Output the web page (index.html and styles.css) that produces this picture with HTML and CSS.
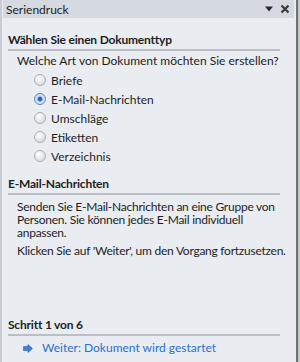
FILE: index.html
```html
<!DOCTYPE html>
<html lang="de">
<head>
<meta charset="utf-8">
<link rel="stylesheet" href="styles.css">
</head>
<body>
<div class="frame">
  <div class="pane">
    <div class="titlebar">
      <span class="title">Seriendruck</span>
      <span class="tools">
        <svg class="ico" width="10" height="6" viewBox="0 0 10 6"><path d="M1 0.5 L9 0.5 L5 5.5 Z" fill="#2b2b2b"/></svg>
        <svg class="ico" width="10" height="10" viewBox="0 0 10 10"><path d="M1.5 1.5 L8.5 8.5 M8.5 1.5 L1.5 8.5" stroke="#3a3a3a" stroke-width="2.2"/></svg>
      </span>
    </div>
    <div class="body">
      <div class="section">
        <div class="heading">Wählen Sie einen Dokumenttyp</div>
        <div class="question">Welche Art von Dokument möchten Sie erstellen?</div>
        <div class="radios">
          <div class="radio"><span class="dot"></span>Briefe</div>
          <div class="radio"><span class="dot on"></span>E-Mail-Nachrichten</div>
          <div class="radio"><span class="dot"></span>Umschläge</div>
          <div class="radio"><span class="dot"></span>Etiketten</div>
          <div class="radio"><span class="dot"></span>Verzeichnis</div>
        </div>
      </div>
      <div class="section second">
        <div class="heading">E-Mail-Nachrichten</div>
        <p class="text">Senden Sie E-Mail-Nachrichten an eine Gruppe von Personen. Sie können jedes E-Mail individuell anpassen.</p>
        <p class="text">Klicken Sie auf 'Weiter', um den Vorgang fortzusetzen.</p>
      </div>
      <div class="spacer"></div>
      <div class="section footer">
        <div class="heading">Schritt 1 von 6</div>
        <div class="link">
          <svg class="arrow" width="10" height="9" viewBox="0 0 10 9"><path d="M0.5 2.5 H5 V0.5 L9.5 4.5 L5 8.5 V6.5 H0.5 Z" fill="#3f7fd6" stroke="#2a5fae" stroke-width="0.6"/></svg>
          <span>Weiter: Dokument wird gestartet</span>
        </div>
      </div>
    </div>
  </div>
  <div class="edge"></div>
</div>
</body>
</html>
```
FILE: styles.css
```css
html, body {
  margin: 0;
  padding: 0;
  height: 100%;
}
body {
  font-family: Lato, "Liberation Sans", sans-serif;
  font-size: 12px;
  color: #1e1e1e;
  background: #e9ecf1;
}
.frame {
  display: flex;
  height: 362px;
  border-left: 2px solid #c9cdd3;
}
.pane {
  flex: 1;
  display: flex;
  flex-direction: column;
  background: #e9ecf1;
  padding-left: 1px;
  padding-right: 2px;
}
.edge {
  width: 4px;
  background: linear-gradient(to right, #6e7379 0, #6e7379 2px, #b9c4b6 2px, #c9d1c4 4px);
}
.titlebar {
  height: 18px;
  background: #d5d9e1;
  display: flex;
  align-items: center;
  justify-content: space-between;
  padding: 0 4px 0 3px;
}
.title {
  font-size: 12px;
  color: #222;
}
.tools {
  display: flex;
  align-items: center;
  gap: 6px;
}
.body {
  flex: 1;
  display: flex;
  flex-direction: column;
  padding: 0 14px 0 5px;
}
.section {
  display: flex;
  flex-direction: column;
}
.heading {
  font-weight: bold;
  margin-top: 14px;
  padding-bottom: 1px;
  border-bottom: 2px solid #babec5;
  line-height: 16px;
  letter-spacing: -0.2px;
}
.question {
  margin: 2px -6px 0 9px;
  line-height: 16px;
}
.radios {
  display: flex;
  flex-direction: column;
  margin: 2px 0 0 26px;
  gap: 1px;
}
.radio {
  display: flex;
  align-items: center;
  gap: 5px;
  height: 18px;
}
.dot {
  width: 12px;
  height: 12px;
  border-radius: 50%;
  box-sizing: border-box;
  border: 1px solid #a9adb3;
  background: radial-gradient(circle at 35% 30%, #ffffff 0, #e4e6e9 55%, #cfd2d6 100%);
}
.dot.on {
  border-color: #5c84b8;
  background: radial-gradient(circle at 50% 50%, #1f55b0 0, #2e6ad0 28%, #c8d6ea 40%, #eef2f8 100%);
}
.second .heading {
  margin-top: 11px;
}
.text {
  margin: 5px -8px 0 9px;
  line-height: 13px;
  letter-spacing: -0.25px;
}
.text + .text {
  margin-top: 5px;
}
.spacer {
  flex: 1;
}
.footer {
  padding-bottom: 6px;
}
.link {
  display: flex;
  align-items: center;
  gap: 9px;
  margin: 4px 0 0 15px;
  color: #2b6fd0;
  line-height: 16px;
}
```
